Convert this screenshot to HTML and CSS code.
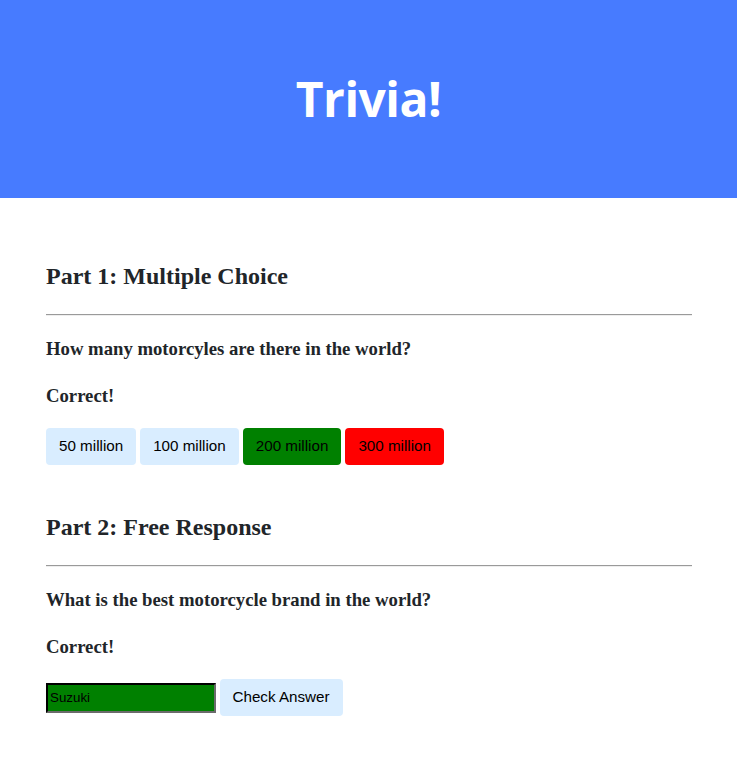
FILE: index.html
```html
<!DOCTYPE html>
<html lang="en">
<head>
<meta charset="utf-8">
<title>Trivia!</title>
<link rel="stylesheet" href="styles.css">
</head>
<body>
<div class="header">
  <h1 class="title">Trivia!</h1>
</div>
<div class="container">
  <div class="section">
    <h2 class="part">Part 1: Multiple Choice</h2>
    <hr class="rule">
    <h3 class="question">How many motorcyles are there in the world?</h3>
    <h3 class="feedback">Correct!</h3>
    <div class="choices">
      <button class="btn">50 million</button>
      <button class="btn">100 million</button>
      <button class="btn btn-correct">200 million</button>
      <button class="btn btn-wrong">300 million</button>
    </div>
  </div>
  <div class="section">
    <h2 class="part">Part 2: Free Response</h2>
    <hr class="rule">
    <h3 class="question">What is the best motorcycle brand in the world?</h3>
    <h3 class="feedback">Correct!</h3>
    <form class="answer-form" onsubmit="return false;">
      <input class="answer-input" type="text" value="Suzuki">
      <button class="btn" type="submit">Check Answer</button>
    </form>
  </div>
</div>
</body>
</html>
```
FILE: styles.css
```css
body {
  background-color: #fff;
  color: #212529;
  font-family: "Liberation Serif", "Times New Roman", serif;
  font-size: 16px;
  font-weight: 400;
  line-height: 1.5;
  margin: 0;
  text-align: left;
}

.header {
  background-color: #477bff;
  color: #fff;
  padding: 32px 16px;
  text-align: center;
}

.title {
  font-family: "Open Sans", "Liberation Sans", sans-serif;
  font-size: 48px;
  font-weight: 700;
  line-height: 72px;
  margin: 31px 0;
  letter-spacing: -0.5px;
}

.container {
  padding: 32px 45px 0 46px;
}

.section {
  padding: 8px 0 16px 0;
}

.part {
  font-size: 24px;
  font-weight: 700;
  margin: 20px 0;
}

.rule {
  margin: 8px 0;
  border: 0;
  border-top: 1px solid #9a9a9a;
  border-bottom: 1px solid #eeeeee;
}

.question,
.feedback {
  font-size: 18.72px;
  font-weight: 700;
  margin: 18.72px 0;
}

.choices,
.answer-form {
  margin: 0;
}

.btn {
  background-color: #d9edff;
  border: 1px solid transparent;
  border-radius: 4px;
  color: #000;
  font-family: "Liberation Sans", Arial, sans-serif;
  font-size: 15.2px;
  font-weight: 400;
  line-height: 1.5;
  padding: 6px 12px;
  text-align: center;
  vertical-align: middle;
}

.btn-correct {
  background-color: green;
}

.btn-wrong {
  background-color: red;
}

.answer-input {
  background-color: green;
  color: #000;
  font-family: "Liberation Sans", Arial, sans-serif;
  font-size: 13.33px;
  line-height: 1.8;
  width: 25%;
  padding: 1px 2px;
  border: 2px inset #767676;
  border-top-color: #222;
  border-left-color: #222;
  border-right-color: #6b6b6b;
  border-bottom-color: #6b6b6b;
  vertical-align: middle;
}
```
